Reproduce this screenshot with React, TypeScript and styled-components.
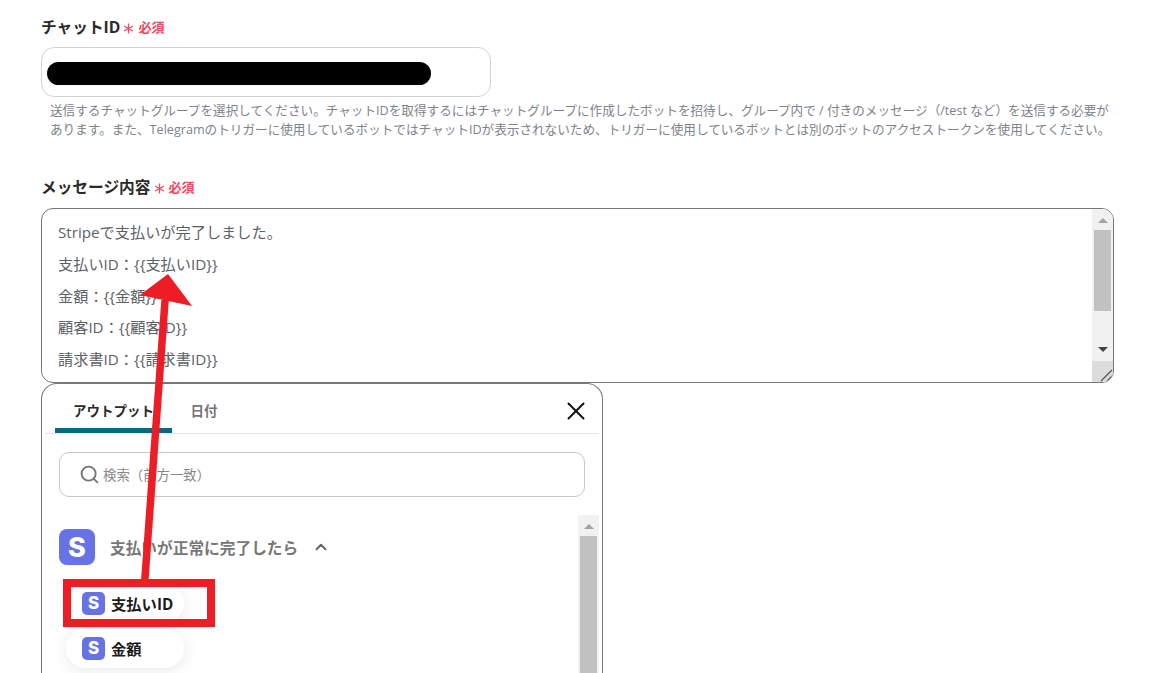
import React from 'react';
import styled, { createGlobalStyle } from 'styled-components';
import { X, Search, ChevronUp } from 'lucide-react';

const GlobalStyle = createGlobalStyle`
  html, body {
    margin: 0;
    padding: 0;
    background: #fff;
  }
  body {
    font-family: "Open Sans", "Noto Sans CJK JP", sans-serif;
  }
`;

const Page = styled.div`
  position: relative;
  width: 1150px;
  height: 673px;
  overflow: hidden;
  box-sizing: border-box;
  padding: 16px 36px 0 41px;
`;

const Label = styled.div`
  display: flex;
  align-items: center;
  height: 20px;
  font-size: 15.7px;
  font-weight: 700;
  color: #2b2b2b;
`;

const Required = styled.span`
  display: inline-flex;
  align-items: center;
  margin-left: 3px;
  font-size: 13px;
  font-weight: 700;
  color: #f2485f;

  & > svg {
    margin: 4px 4px 0 0;
  }
`;

const Input = styled.div`
  display: flex;
  align-items: center;
  box-sizing: border-box;
  width: 450px;
  height: 50px;
  margin-top: 11px;
  padding: 2px 0 0 5px;
  border: 1px solid #d0d3da;
  border-radius: 13px;
`;

const Redaction = styled.div`
  width: 384px;
  height: 23px;
  border-radius: 12px;
  background: #000;
`;

const Help = styled.p`
  margin: 4px 0 37px 9px;
  font-size: 12.62px;
  line-height: 19px;
  color: #7d838a;
  white-space: nowrap;
`;

const TextArea = styled.div`
  display: flex;
  box-sizing: border-box;
  height: 175px;
  margin-top: 12px;
  border: 1px solid #777;
  border-radius: 12px;
  overflow: hidden;
`;

const Lines = styled.div`
  flex: 1;
  padding: 8px 16px 0;
  font-size: 15.2px;
  line-height: 31.8px;
  color: #5c6166;
`;

const Bar = styled.div`
  display: flex;
  flex-direction: column;
  align-items: center;
  flex-shrink: 0;
  width: ${({ $width }: { $width: number }) => $width}px;
  background: #f1f1f1;
`;

const Arrow = styled.div<{ $down?: boolean; $top: number }>`
  width: 0;
  height: 0;
  margin-top: ${({ $top }) => $top}px;
  border-left: 5px solid transparent;
  border-right: 5px solid transparent;
  ${({ $down }) =>
    $down ? 'border-top: 5px solid #444;' : 'border-bottom: 5px solid #a3a3a3;'}
`;

const Thumb = styled.div<{ $height: number; $top: number }>`
  width: 17px;
  height: ${({ $height }) => $height}px;
  margin-top: ${({ $top }) => $top}px;
  flex-shrink: 0;
  background: #c1c1c1;
`;

const Grip = styled.div`
  display: flex;
  align-items: flex-end;
  justify-content: flex-end;
  width: 100%;
  height: 21px;
  margin-top: auto;
  background: #dcdcdc;
`;

const Popup = styled.div`
  box-sizing: border-box;
  width: 562px;
  height: 320px;
  background: #fff;
  border: 1px solid #777;
  border-bottom: 0;
  border-radius: 16px 16px 0 0;
`;

const TabRow = styled.div`
  display: flex;
  align-items: flex-end;
  height: 49px;
  margin: 0 3px;
  padding-left: 10px;
  border-bottom: 1px solid #e4e4e4;
`;

const Tab = styled.div<{ $active?: boolean }>`
  box-sizing: border-box;
  display: flex;
  justify-content: center;
  width: ${({ $active }) => ($active ? '117px' : '64px')};
  height: 44px;
  padding-top: 11px;
  font-size: 13.5px;
  font-weight: 700;
  color: ${({ $active }) => ($active ? '#2b2b2b' : '#777')};
  border-bottom: 5px solid ${({ $active }) => ($active ? '#056a82' : 'transparent')};
  border-radius: 4px 4px 0 0;
`;

const CloseButton = styled.div`
  display: flex;
  margin: 0 8px 7px auto;
  color: #111;
`;

const SearchBox = styled.div`
  display: flex;
  align-items: center;
  gap: 3px;
  box-sizing: border-box;
  height: 45px;
  margin: 18px 17px 0;
  padding: 0 0 2px 19px;
  border: 1px solid #c8c8c8;
  border-radius: 10px;
  font-size: 13.4px;
  color: #888;

  & > svg {
    margin-top: 2px;
  }
`;

const ListArea = styled.div`
  display: flex;
  height: 160px;
  margin-top: 18px;
  padding-left: 17px;
`;

const List = styled.div`
  flex: 1;
`;

const SectionHead = styled.div`
  display: flex;
  align-items: center;
  height: 36px;
  margin: 14px 0 19px;
  font-size: 15.7px;
  font-weight: 700;
  color: #777;
`;

const Logo = styled.div<{ $size: number }>`
  display: flex;
  align-items: center;
  justify-content: center;
  flex-shrink: 0;
  width: ${({ $size }) => $size}px;
  height: ${({ $size }) => $size}px;
  border-radius: ${({ $size }) => Math.round($size / 4.5)}px;
  background: #6772e5;
  color: #fff;
  font-family: Inter, sans-serif;
  font-size: ${({ $size }) => Math.round($size * 0.75)}px;
  font-weight: 800;
`;

const SectionTitle = styled.span`
  margin: 0 14px 0 15px;
`;

const Pill = styled.div<{ $width: number }>`
  display: flex;
  align-items: center;
  gap: 6px;
  box-sizing: border-box;
  width: ${({ $width }) => $width}px;
  height: 39px;
  margin: 0 0 6px 7px;
  padding: 0 0 1px 16px;
  border-radius: 20px;
  background: #fff;
  box-shadow: 0 3px 16px rgba(0, 0, 0, 0.09);
  font-size: 15.3px;
  font-weight: 700;
  color: #1c1c1c;
`;

const ScrollGutter = styled.div`
  width: 3px;
  flex-shrink: 0;
`;

const Overlay = styled.svg`
  position: absolute;
  top: 0;
  left: 0;
  pointer-events: none;
`;

const Asterisk = () => (
  <svg width="11" height="11" viewBox="0 0 11 11">
    <path d="M5.5 0.5v10M1 3l9 5M10 3 1 8" stroke="#f2485f" strokeWidth="1.3" fill="none" />
  </svg>
);

export default function App() {
  return (
    <>
      <GlobalStyle />
      <Page>
        <Label>
          チャットID
          <Required>
            <Asterisk />必須
          </Required>
        </Label>
        <Input>
          <Redaction />
        </Input>
        <Help>
          送信するチャットグループを選択してください。チャットIDを取得するにはチャットグループに作成したボットを招待し、グループ内で / 付きのメッセージ（/test など）を送信する必要が
          <br />
          あります。また、Telegramのトリガーに使用しているボットではチャットIDが表示されないため、トリガーに使用しているボットとは別のボットのアクセストークンを使用してください。
        </Help>

        <Label>
          メッセージ内容
          <Required>
            <Asterisk />必須
          </Required>
        </Label>
        <TextArea>
          <Lines>
            <div>Stripeで支払いが完了しました。</div>
            <div>支払いID：{'{{支払いID}}'}</div>
            <div>金額：{'{{金額}}'}</div>
            <div>顧客ID：{'{{顧客ID}}'}</div>
            <div>請求書ID：{'{{請求書ID}}'}</div>
          </Lines>
          <Bar $width={21}>
            <Arrow $top={9} />
            <Thumb $height={81} $top={7} />
            <Arrow $down $top={36} />
            <Grip>
              <svg width="14" height="14" viewBox="0 0 14 14">
                <path d="M2 13 13 2M8 13l5-5" stroke="#555" strokeWidth="1.2" fill="none" />
              </svg>
            </Grip>
          </Bar>
        </TextArea>

        <Popup>
          <TabRow>
            <Tab $active>アウトプット</Tab>
            <Tab>日付</Tab>
            <CloseButton>
              <X size={30} strokeWidth={1.6} />
            </CloseButton>
          </TabRow>
          <SearchBox>
            <Search size={21} color="#777" strokeWidth={2.2} />
            検索（前方一致）
          </SearchBox>
          <ListArea>
            <List>
              <SectionHead>
                <Logo $size={36}>S</Logo>
                <SectionTitle>支払いが正常に完了したら</SectionTitle>
                <ChevronUp size={18} color="#666" strokeWidth={2.6} />
              </SectionHead>
              <Pill $width={118}>
                <Logo $size={23}>S</Logo>
                支払いID
              </Pill>
              <Pill $width={118}>
                <Logo $size={23}>S</Logo>
                金額
              </Pill>
            </List>
            <Bar $width={21}>
              <Arrow $top={9} />
              <Thumb $height={140} $top={7} />
            </Bar>
            <ScrollGutter />
          </ListArea>
        </Popup>

        <Overlay width="1150" height="673" viewBox="0 0 1150 673">
          <rect x="67" y="583" width="144" height="40" fill="none" stroke="#ee1c25" strokeWidth="8" />
          <path d="M141 581 161.3 300 168.8 300 148.5 581Z" fill="#ee1c25" />
          <path d="M168 274 192 306 140 295Z" fill="#ee1c25" />
        </Overlay>
      </Page>
    </>
  );
}
